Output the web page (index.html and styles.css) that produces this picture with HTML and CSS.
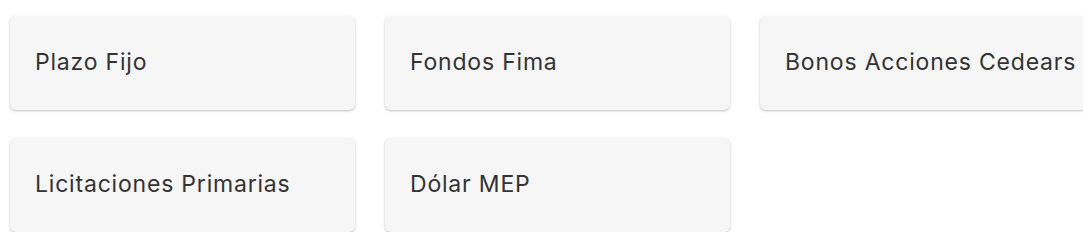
FILE: index.html
```html
<!DOCTYPE html>
<html lang="es">
<head>
<meta charset="utf-8">
<link rel="stylesheet" href="styles.css">
</head>
<body>
<div class="grid">
  <div class="card">Plazo Fijo</div>
  <div class="card">Fondos Fima</div>
  <div class="card">Bonos Acciones Cedears</div>
  <div class="card">Licitaciones Primarias</div>
  <div class="card">Dólar MEP</div>
</div>
</body>
</html>
```
FILE: styles.css
```css
html, body {
  margin: 0;
  padding: 0;
  background: #ffffff;
  overflow: hidden;
}
.grid {
  display: grid;
  grid-template-columns: repeat(3, 345px);
  column-gap: 30px;
  row-gap: 28px;
  padding: 16px 0 0 10px;
  width: max-content;
}
.card {
  height: 94px;
  box-sizing: border-box;
  background: #f6f6f6;
  border-radius: 6px;
  box-shadow: 0 1px 3px rgba(0,0,0,0.2), 0 1px 2px rgba(0,0,0,0.06);
  display: flex;
  align-items: center;
  padding: 0 0 2px 25px;
  font-family: Inter, "Noto Sans", sans-serif;
  font-size: 23px;
  letter-spacing: 0.8px;
  font-weight: 400;
  color: #333333;
  white-space: nowrap;
}
```
